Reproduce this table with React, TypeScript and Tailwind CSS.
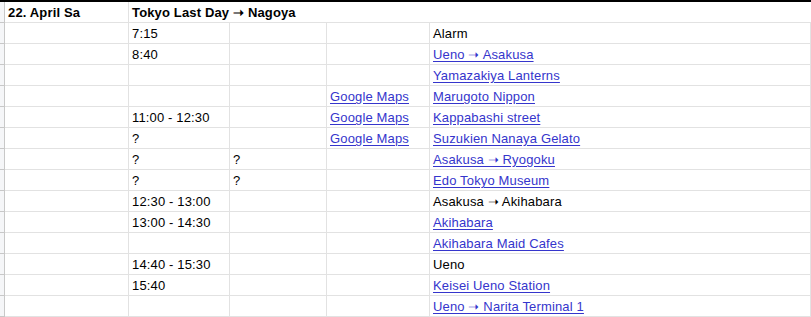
import React from "react";

type Cell = { text: string; link?: boolean };

interface Row {
  time?: string;
  note?: string;
  maps?: boolean;
  place: Cell;
}

const rows: Row[] = [
  { time: "7:15", place: { text: "Alarm" } },
  { time: "8:40", place: { text: "Ueno ➝ Asakusa", link: true } },
  { place: { text: "Yamazakiya Lanterns", link: true } },
  { maps: true, place: { text: "Marugoto Nippon", link: true } },
  { time: "11:00 - 12:30", maps: true, place: { text: "Kappabashi street", link: true } },
  { time: "?", maps: true, place: { text: "Suzukien Nanaya Gelato", link: true } },
  { time: "?", note: "?", place: { text: "Asakusa ➝ Ryogoku", link: true } },
  { time: "?", note: "?", place: { text: "Edo Tokyo Museum", link: true } },
  { time: "12:30 - 13:00", place: { text: "Asakusa ➝ Akihabara" } },
  { time: "13:00 - 14:30", place: { text: "Akihabara", link: true } },
  { place: { text: "Akihabara Maid Cafes", link: true } },
  { time: "14:40 - 15:30", place: { text: "Ueno" } },
  { time: "15:40", place: { text: "Keisei Ueno Station", link: true } },
  { place: { text: "Ueno ➝ Narita Terminal 1", link: true } },
];

const cell = "h-[21px] border-r border-b border-[#e2e2e2] pl-[3px] pt-[1px] leading-[20px] whitespace-nowrap overflow-visible";
const linkCls = "text-[#3535cc] underline underline-offset-[2px]";

const App = () => {
  return (
    <div
      className="w-[811px] h-[317px] bg-white text-[13px] tracking-[0.15px] text-black overflow-hidden"
      style={{ fontFamily: '"Liberation Sans", Arial, sans-serif' }}
    >
      <div className="border-t-2 border-black grid grid-cols-[5px_124px_101px_97px_103px_381px]">
        {/* header row */}
        <div className="h-[21px] bg-[#f5f6f8] border-r border-b border-[#c8c8c8]" />
        <div className={`${cell} font-bold`}>22. April Sa</div>
        <div className="col-span-4 h-[21px] border-b border-[#e2e2e2] pl-[3px] pt-[1px] leading-[20px] font-bold whitespace-nowrap">
          Tokyo Last Day ➝ Nagoya
        </div>

        {rows.map((r, i) => (
          <React.Fragment key={i}>
            <div className="h-[21px] bg-[#f5f6f8] border-r border-b border-[#c8c8c8]" />
            <div className={cell} />
            <div className={cell}>{r.time}</div>
            <div className={cell}>{r.note}</div>
            <div className={cell}>
              {r.maps && <span className={linkCls}>Google Maps</span>}
            </div>
            <div className={cell}>
              <span className={r.place.link ? linkCls : ""}>{r.place.text}</span>
            </div>
          </React.Fragment>
        ))}
      </div>
    </div>
  );
};

export default App;
